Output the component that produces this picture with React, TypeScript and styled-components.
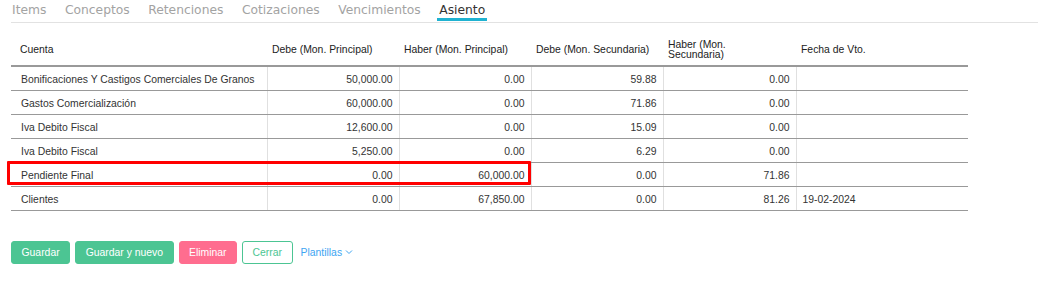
import React from "react";
import styled, { createGlobalStyle } from "styled-components";

const GlobalStyle = createGlobalStyle`
  body {
    margin: 0;
    background: #fff;
    font-family: "Liberation Sans", Arial, sans-serif;
    color: #333;
  }
`;

const Page = styled.div`
  padding: 0 0 0 11px;
`;

const Tabs = styled.div`
  display: flex;
  gap: 18.5px;
  border-bottom: 1px solid #e2e2e2;
  height: 22px;
  padding-left: 1px;
`;

const Tab = styled.div<{ $active?: boolean }>`
  font-family: "DejaVu Sans", sans-serif;
  font-size: 12.3px;
  color: ${(p) => (p.$active ? "#333" : "#a3a3a3")};
  position: relative;
  height: 21px;
  line-height: 21px;
  ${(p) =>
    p.$active &&
    `
    &::after {
      content: "";
      position: absolute;
      left: -2px;
      right: -2px;
      bottom: 0;
      height: 3px;
      background: #1fb2d1;
    }
  `}
`;

const TableWrap = styled.div`
  position: relative;
  width: 957px;
  margin-top: 12px;
`;

const Table = styled.table`
  border-collapse: collapse;
  table-layout: fixed;
  width: 957px;
  font-size: 10.4px;
`;

const Th = styled.th<{ $w: number }>`
  box-sizing: border-box;
  width: ${(p) => p.$w}px;
  text-align: left;
  font-weight: normal;
  color: #222;
  height: 31px;
  padding: 0 5px;
  line-height: 10.5px;
  border-bottom: 2px solid #999;
  vertical-align: middle;
  &:first-child {
    padding-left: 9px;
  }
`;

const Td = styled.td<{ $num?: boolean }>`
  height: 24px;
  box-sizing: border-box;
  padding: 2px 6px 0;
  border-bottom: 1px solid #999;
  border-left: 1px solid #e0e0e0;
  text-align: ${(p) => (p.$num ? "right" : "left")};
  color: #333;
  white-space: nowrap;
  &:first-child {
    border-left: none;
    padding-left: 10px;
  }
`;

const Highlight = styled.div`
  position: absolute;
  left: -4px;
  top: 126px;
  width: 524px;
  height: 24px;
  border: 3px solid #f00;
  border-radius: 1px;
  box-sizing: border-box;
  pointer-events: none;
`;

const Actions = styled.div`
  display: flex;
  align-items: center;
  gap: 5px;
  margin-top: 30px;
`;

const Button = styled.button<{ $variant: "save" | "danger" | "outline" }>`
  font-family: "Liberation Sans", Arial, sans-serif;
  font-size: 10.4px;
  height: 23px;
  padding: 0 9.5px;
  border-radius: 3px;
  cursor: pointer;
  border: 1px solid
    ${(p) => (p.$variant === "danger" ? "#ff6d8f" : "#4cc593")};
  background: ${(p) =>
    p.$variant === "save"
      ? "#4cc593"
      : p.$variant === "danger"
      ? "#ff6d8f"
      : "#fff"};
  color: ${(p) => (p.$variant === "outline" ? "#4cc593" : "#fff")};
`;

const LinkButton = styled.span`
  display: inline-flex;
  align-items: center;
  gap: 3px;
  font-size: 10.4px;
  color: #3ea5f2;
  margin-left: 3px;
  cursor: pointer;
`;

const columns = [
  { label: "Cuenta", w: 256 },
  { label: "Debe (Mon. Principal)", w: 132 },
  { label: "Haber (Mon. Principal)", w: 132 },
  { label: "Debe (Mon. Secundaria)", w: 132 },
  { label: "Haber (Mon. Secundaria)", w: 133 },
  { label: "Fecha de Vto.", w: 172 },
];

const rows = [
  ["Bonificaciones Y Castigos Comerciales De Granos", "50,000.00", "0.00", "59.88", "0.00", ""],
  ["Gastos Comercialización", "60,000.00", "0.00", "71.86", "0.00", ""],
  ["Iva Debito Fiscal", "12,600.00", "0.00", "15.09", "0.00", ""],
  ["Iva Debito Fiscal", "5,250.00", "0.00", "6.29", "0.00", ""],
  ["Pendiente Final", "0.00", "60,000.00", "0.00", "71.86", ""],
  ["Clientes", "0.00", "67,850.00", "0.00", "81.26", "19-02-2024"],
];

const tabs = ["Items", "Conceptos", "Retenciones", "Cotizaciones", "Vencimientos", "Asiento"];

export default function App() {
  return (
    <Page>
      <GlobalStyle />
      <Tabs>
        {tabs.map((t) => (
          <Tab key={t} $active={t === "Asiento"}>
            {t}
          </Tab>
        ))}
      </Tabs>
      <TableWrap>
        <Table>
          <thead>
            <tr>
              {columns.map((c) => (
                <Th key={c.label} $w={c.w}>
                  {c.label === "Haber (Mon. Secundaria)" ? (
                    <>
                      Haber (Mon.
                      <br />
                      Secundaria)
                    </>
                  ) : (
                    c.label
                  )}
                </Th>
              ))}
            </tr>
          </thead>
          <tbody>
            {rows.map((r, i) => (
              <tr key={i}>
                {r.map((v, j) => (
                  <Td key={j} $num={j > 0 && j < 5}>
                    {v}
                  </Td>
                ))}
              </tr>
            ))}
          </tbody>
        </Table>
        <Highlight />
      </TableWrap>
      <Actions>
        <Button $variant="save">Guardar</Button>
        <Button $variant="save">Guardar y nuevo</Button>
        <Button $variant="danger">Eliminar</Button>
        <Button $variant="outline">Cerrar</Button>
        <LinkButton>
          Plantillas
          <svg width="8" height="6" viewBox="0 0 8 6" fill="none">
            <path d="M1 1.5 L4 4.5 L7 1.5" stroke="#3ea5f2" strokeWidth="1" />
          </svg>
        </LinkButton>
      </Actions>
    </Page>
  );
}
